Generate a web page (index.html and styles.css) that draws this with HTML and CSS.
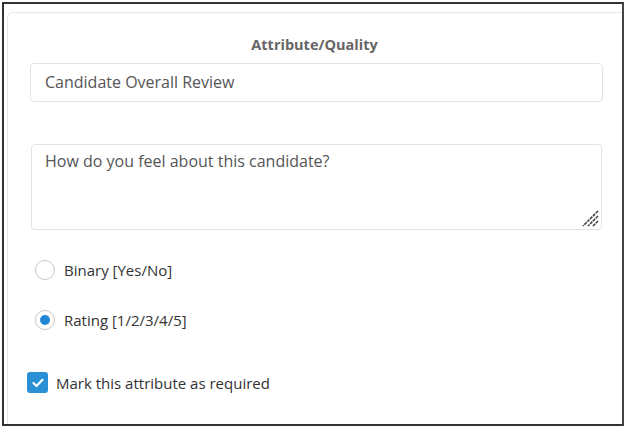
FILE: index.html
```html
<!DOCTYPE html>
<html>
<head>
<meta charset="utf-8">
<link rel="stylesheet" href="styles.css">
</head>
<body>
<div class="frame">
  <div class="card">
    <div class="title">Attribute/Quality</div>
    <div class="input">Candidate Overall Review</div>
    <div class="textarea">How do you feel about this candidate?
      <svg class="grip" width="20" height="20" viewBox="0 0 20 20">
        <path d="M18 3 L3 18 M18 8 L8 18 M18 13 L13 18" stroke="#444" stroke-width="1.6" fill="none" stroke-dasharray="3.2 0.8"/>
      </svg>
    </div>
    <div class="options">
      <label class="radio"><span class="circle"></span>Binary [Yes/No]</label>
      <label class="radio"><span class="circle on"></span>Rating [1/2/3/4/5]</label>
    </div>
    <label class="check">
      <span class="box"><svg width="12" height="10" viewBox="0 0 12 10"><path d="M1.5 5 L4.5 8 L10.5 1.8" stroke="#fff" stroke-width="2.2" fill="none" stroke-linecap="round" stroke-linejoin="round"/></svg></span>
      Mark this attribute as required
    </label>
  </div>
</div>
</body>
</html>
```
FILE: styles.css
```css
* { box-sizing: border-box; }
html, body { margin: 0; padding: 0; background: #fff; }
body { font-family: "Open Sans", sans-serif; color: #444; }
.frame {
  margin: 2px 0 0 2px;
  width: 622px;
  height: 424px;
  border: 2px solid #333;
  border-right-color: #444;
  padding: 8px 0 0 3px;
  overflow: hidden;
}
.card {
  border: 1px solid #e6e6e6;
  border-right: none;
  border-bottom: none;
  border-radius: 6px 0 0 0;
  height: 420px;
  padding: 22px 0 0 19px;
}
.title {
  text-align: center;
  font-size: 14.5px;
  font-weight: 700;
  color: #666;
  line-height: 20px;
  padding-right: 19px;
  margin-left: -1px;
}
.input {
  margin-top: 8px;
  margin-left: 3px;
  width: 573px;
  height: 39px;
  border: 1px solid #e3e3e3;
  border-radius: 4px;
  padding: 0 0 0 14px;
  font-size: 16px;
  line-height: 37px;
  color: #555;
}
.textarea {
  position: relative;
  margin-top: 42px;
  margin-left: 4px;
  width: 571px;
  height: 86px;
  border: 1px solid #e3e3e3;
  border-radius: 4px;
  padding: 4px 0 0 13px;
  font-size: 16px;
  line-height: 24px;
  color: #555;
}
.grip { position: absolute; right: 1px; bottom: 1px; }
.options {
  margin-top: 30px;
  margin-left: 8px;
  display: flex;
  flex-direction: column;
  gap: 30px;
}
.radio {
  display: flex;
  align-items: center;
  gap: 9px;
  font-size: 15px;
  color: #333;
  height: 20px;
}
.circle {
  width: 20px;
  height: 20px;
  border: 1px solid #c8c8c8;
  border-radius: 50%;
  background: #fff;
  position: relative;
}
.circle.on::after {
  content: "";
  position: absolute;
  left: 4px; top: 4px;
  width: 10px; height: 10px;
  border-radius: 50%;
  background: #1f86d4;
}
.check {
  margin-top: 42px;
  display: flex;
  align-items: center;
  gap: 8px;
  font-size: 15px;
  color: #333;
}
.box {
  width: 21px;
  height: 21px;
  border-radius: 3px;
  background: #2b8fd6;
  display: flex;
  align-items: center;
  justify-content: center;
}
```
